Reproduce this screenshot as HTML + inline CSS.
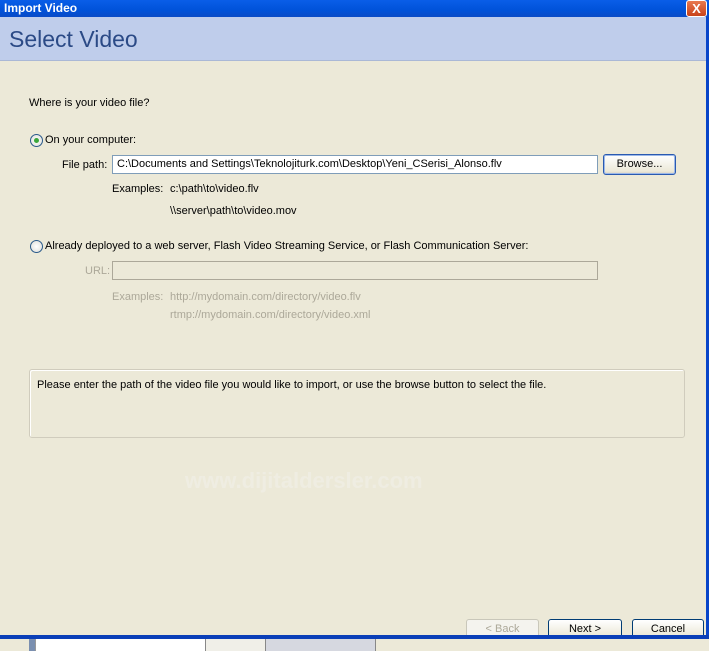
<!DOCTYPE html>
<html><head><meta charset="utf-8"><style>
*{margin:0;padding:0;box-sizing:border-box}
body{width:709px;height:651px;overflow:hidden;background:#ece9d8;font-family:"Liberation Sans",sans-serif;font-size:11px;color:#000;position:relative}
.a{position:absolute;white-space:nowrap}
.title{left:0;top:0;width:709px;height:17px;background:linear-gradient(#0a5ee8,#0052d9 60%,#0a4bc6);color:#fff;font-weight:bold;font-size:12px;padding:1px 4px;letter-spacing:0}
.close{right:2px;top:0;width:21px;height:17px;background:linear-gradient(#e8794f,#c8421a);border:1px solid #fff;border-radius:3px;color:#fff;font-weight:bold;text-align:center;font-size:13px;line-height:15px}
.hdr{left:0;top:17px;width:706px;height:44px;background:#bfcdeb;border-bottom:1px solid #aab8d6}
.hdr span{position:absolute;left:9px;top:9px;font-size:23px;color:#2b4a86}
.rb{position:absolute;right:0;top:17px;width:3px;height:618px;background:#0845c9}
.radio{width:13px;height:13px;border:1px solid #2a5a8a;border-radius:50%;background:radial-gradient(#fff,#dcdcd6)}
.radio.on::after{content:"";position:absolute;left:3px;top:3px;width:5px;height:5px;border-radius:50%;background:#3aa63a}
.inp{background:#fff;border:1px solid #7f9db9;height:19px;padding:2px 4px;font-size:11px}
.btn{border:1px solid #003c74;border-radius:3px;background:linear-gradient(#fff,#ece9d8 85%,#d6d0c5);text-align:center;height:21px;line-height:19px;font-size:11px}
.gray{color:#aca899}
</style></head><body>
<div class="a title">Import Video</div>
<div class="a close">X</div>
<div class="a hdr"><span>Select Video</span></div>
<div class="rb"></div>

<div class="a" style="left:29px;top:97px">Where is your video file?</div>
<div class="a radio on" style="left:30px;top:134px"></div>
<div class="a" style="left:45px;top:134px">On your computer:</div>
<div class="a" style="left:62px;top:159px">File path:</div>
<div class="a inp" style="left:112px;top:155px;width:486px">C:\Documents and Settings\Teknolojiturk.com\Desktop\Yeni_CSerisi_Alonso.flv</div>
<div class="a btn" style="left:603px;top:154px;width:73px;border-color:#2a5ab0;box-shadow:inset 0 0 0 1px #9cb8e8">Browse...</div>
<div class="a" style="left:112px;top:183px">Examples:</div>
<div class="a" style="left:170px;top:183px">c:\path\to\video.flv</div>
<div class="a" style="left:170px;top:205px">\\server\path\to\video.mov</div>

<div class="a radio" style="left:30px;top:240px"></div>
<div class="a" style="left:45px;top:240px">Already deployed to a web server, Flash Video Streaming Service, or Flash Communication Server:</div>
<div class="a gray" style="left:85px;top:265px">URL:</div>
<div class="a" style="left:112px;top:261px;width:486px;height:19px;border:1px solid #aca899;background:#ece9d8"></div>
<div class="a gray" style="left:112px;top:291px">Examples:</div>
<div class="a gray" style="left:170px;top:291px">http://mydomain.com/directory/video.flv</div>
<div class="a gray" style="left:170px;top:309px">rtmp://mydomain.com/directory/video.xml</div>

<div class="a" style="left:29px;top:369px;width:656px;height:69px;border:1px solid #d0ccbd;border-radius:3px;background:#ece9d8;box-shadow:inset 1px 1px 0 #fff"></div>
<div class="a" style="left:37px;top:379px">Please enter the path of the video file you would like to import, or use the browse button to select the file.</div>
<div class="a" style="left:185px;top:468px;font-size:22px;font-weight:bold;color:#efede2">www.dijitaldersler.com</div>

<div class="a btn" style="left:466px;top:619px;width:73px;height:20px;line-height:18px;border-color:#c9c7ba;color:#aca899;background:#f4f3ee">&lt; Back</div>
<div class="a btn" style="left:548px;top:619px;width:74px;height:20px;line-height:18px">Next &gt;</div>
<div class="a btn" style="left:632px;top:619px;width:72px;height:20px;line-height:18px">Cancel</div>

<div class="a" style="left:0;top:635px;width:709px;height:4px;background:#0a3fb8"></div>
<div class="a" style="left:0;top:639px;width:709px;height:12px;background:#ece9d8"></div>
<div class="a" style="left:29px;top:639px;width:6px;height:12px;background:#7a8fb0"></div>
<div class="a" style="left:35px;top:639px;width:170px;height:12px;background:#fff;border-left:1px solid #999"></div>
<div class="a" style="left:205px;top:639px;width:60px;height:12px;border-left:1px solid #888;background:#f0efe8"></div>
<div class="a" style="left:265px;top:639px;width:111px;height:12px;border-left:1px solid #888;border-right:1px solid #888;background:#d6d8e0"></div>
</body></html>
